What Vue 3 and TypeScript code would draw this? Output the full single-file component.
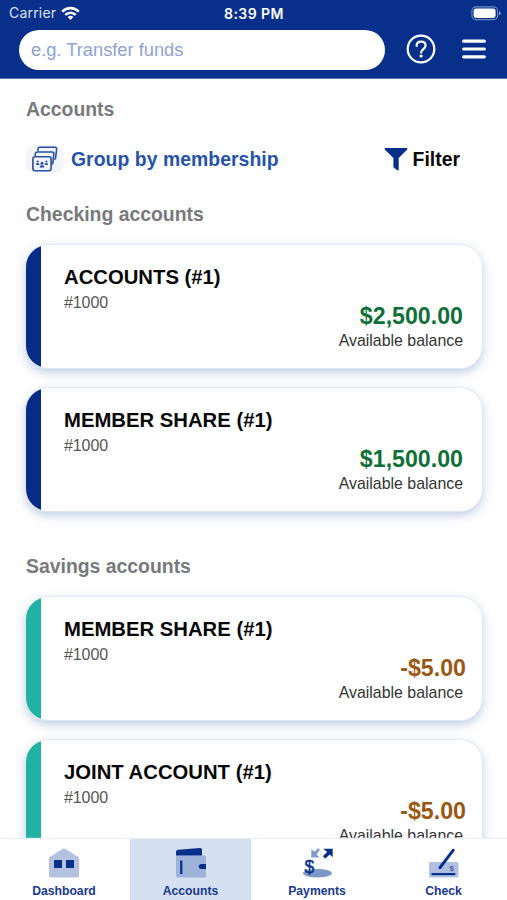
<script setup lang="ts">
interface Account {
  name: string
  number: string
  balance: string
  negative?: boolean
}
interface Section {
  title: string
  kind: string
  accounts: Account[]
}

const sections: Section[] = [
  {
    title: 'Checking accounts',
    kind: 'checking',
    accounts: [
      { name: 'ACCOUNTS (#1)', number: '#1000', balance: '$2,500.00' },
      { name: 'MEMBER SHARE (#1)', number: '#1000', balance: '$1,500.00' },
    ],
  },
  {
    title: 'Savings accounts',
    kind: 'savings',
    accounts: [
      { name: 'MEMBER SHARE (#1)', number: '#1000', balance: '-$5.00', negative: true },
      { name: 'JOINT ACCOUNT (#1)', number: '#1000', balance: '-$5.00', negative: true },
    ],
  },
]
</script>

<template>
  <div class="screen">
    <header class="top">
      <div class="status">
        <div class="carrier">
          <span>Carrier</span>
          <svg width="19" height="15" viewBox="0 0 19 15" fill="none" stroke="#fff" stroke-width="2.6">
            <path d="M1.2 5.6C6 .9 13 .9 17.8 5.6" />
            <path d="M4.3 8.9c3-2.9 7.4-2.9 10.4 0" />
            <path d="M6.7 10.9c1.6-1.5 4-1.5 5.6 0L9.5 14z" fill="#fff" stroke="none" />
          </svg>
        </div>
        <span class="time">8:39 PM</span>
        <div class="power">
          <svg width="31" height="15" viewBox="0 0 31 15">
            <rect x=".9" y=".9" width="25.7" height="12.7" rx="4" fill="none" stroke="#6f89c0" stroke-width="1.1" />
            <rect x="2.6" y="2.6" width="22" height="9.4" rx="2.4" fill="#fff" />
            <path d="M28.2 5v4.5q1.5-.6 1.5-2.25T28.2 5z" fill="#8da2d0" />
          </svg>
        </div>
      </div>
      <div class="tools">
        <div class="search">e.g. Transfer funds</div>
        <svg class="help" width="30" height="30" viewBox="0 0 30 30" fill="none" stroke="#fff" stroke-width="2.2">
          <circle cx="15" cy="15" r="13.3" />
          <path d="M10.6 11.9c0-2.6 1.9-4.3 4.5-4.3s4.5 1.6 4.5 4c0 3.4-4.5 3.6-4.5 7" stroke-linecap="round" />
          <circle cx="15.1" cy="22" r="1.6" fill="#fff" stroke="none" />
        </svg>
        <svg class="burger" width="24" height="22" viewBox="0 0 24 22" stroke="#fff" stroke-width="3.2" stroke-linecap="round">
          <path d="M1.7 3.2h20.6M1.7 11h20.6M1.7 18.8h20.6" />
        </svg>
      </div>
    </header>

    <main class="content">
      <h1 class="heading">Accounts</h1>
      <div class="actions">
        <div class="group">
          <span class="group-icon">
            <svg width="26" height="26" viewBox="0 0 26 26" fill="none" stroke="#2350a0" stroke-width="1.6" stroke-linejoin="round">
              <path d="M6 5V3q0-1.7 1.7-1.7h15.4q1.6 0 1.5 1.7l-1 9q-.1 1.3-1.3 1.3" />
              <path d="M3.3 10V7.800q.1-1.8 1.8-1.8h15.1q1.7 0 1.6 1.7l-.9 9.300q-.2 1.3-1.4 1.3" />
              <rect x=".9" y="10.7" width="18.2" height="14" rx="2.2" />
              <g fill="#2350a0" stroke="none">
                <circle cx="5.7" cy="15.5" r="1.1" /><path d="M3.9 19q0-2 1.8-2t1.8 2z" />
                <circle cx="10" cy="17.2" r="1.5" /><path d="M7.5 21.6q.1-2.5 2.5-2.5t2.5 2.5z" />
                <circle cx="14.4" cy="15.5" r="1.1" /><path d="M12.6 19q0-2 1.8-2t1.8 2z" />
              </g>
            </svg>
          </span>
          <span class="group-label">Group by membership</span>
        </div>
        <div class="filter">
          <svg width="24" height="24" viewBox="0 0 24 24" fill="#08308b">
            <path d="M.7 1h22.600v1.600L14.700 11v12.300h-1.400L9.400 20.300V11L.7 2.600z" />
          </svg>
          <span>Filter</span>
        </div>
      </div>

      <section v-for="s in sections" :key="s.title" class="section" :class="s.kind">
        <h2 class="heading">{{ s.title }}</h2>
        <div class="cards">
          <article v-for="(a, i) in s.accounts" :key="i" class="card">
            <div class="stripe"></div>
            <div class="body">
              <div class="name">{{ a.name }}</div>
              <div class="number">{{ a.number }}</div>
              <div class="amount" :class="{ negative: a.negative }">{{ a.balance }}</div>
              <div class="caption">Available balance</div>
            </div>
          </article>
        </div>
      </section>
    </main>

    <nav class="tabs">
      <div class="tab">
        <svg width="34" height="34" viewBox="0 0 34 34">
          <path d="M2 12.5 17 3l15 9.500V31q0 1.500-1.500 1.500h-27Q2 32.500 2 31z" fill="#b4c1df" />
          <path d="M7 15h8v8H7zM19 15h8v8h-8z" fill="#08308b" />
        </svg>
        <span>Dashboard</span>
      </div>
      <div class="tab active">
        <svg width="34" height="34" viewBox="0 0 34 34">
          <path d="M2 10.500h28.500q1.500 0 1.500 1.500v19q0 1.500-1.500 1.500h-27Q2 32.500 2 31z" fill="#9eb2da" />
          <path d="M2 10.500V7q0-2 2-2.200l22-1.800q2-.1 2 1.800v5.700z" fill="#08308b" />
          <path d="M6.100 15.500h2.300V29H6.100zM32 19v5h-4.700q-2.500 0-2.500-2.500t2.500-2.500z" fill="#08308b" />
        </svg>
        <span>Accounts</span>
      </div>
      <div class="tab">
        <svg width="34" height="34" viewBox="0 0 34 34">
          <ellipse cx="17.500" cy="28.200" rx="14.500" ry="4.200" fill="#7e98c9" />
          <path d="m20 4.500-2-1.200-3.600 3.500-3-2.800-.2 8.400h8.300l-2.900-3z" fill="#8299ca" />
          <path d="M23.300 3.800h9.400v8.400l-2.900-2.800-4.500 4.200-2.500-2.400 4.300-4.300z" fill="#08308b" />
          <text x="4.500" y="27.500" font-size="17.500" font-family="Liberation Sans, sans-serif" font-weight="normal" fill="#08308b" stroke="#08308b" stroke-width=".5">$</text>
        </svg>
        <span>Payments</span>
      </div>
      <div class="tab">
        <svg width="34" height="34" viewBox="0 0 34 34">
          <rect x="2" y="17" width="29.500" height="15.500" rx="1.500" fill="#b1c0e0" />
          <path d="M4.500 28h23.800v2.200H4.500z" fill="#08308b" />
          <path d="m26.300 5.200-13.200 17.300" stroke="#08308b" stroke-width="2.900" stroke-linecap="round" />
          <path d="m11.600 24.500.5-3.300 2.300 1.700z" fill="#08308b" />
          <text x="22.500" y="25.500" font-size="8" font-family="Liberation Sans, sans-serif" font-weight="bold" fill="#4565ab">$</text>
        </svg>
        <span>Check</span>
      </div>
    </nav>
  </div>
</template>

<style>
body {
  margin: 0;
  background: #fff;
  overflow: hidden;
}
</style>

<style scoped>
.screen {
  width: 507px;
  height: 900px;
  display: flex;
  flex-direction: column;
  overflow: hidden;
  background: #fefefe;
  font-family: "Liberation Sans", Arial, sans-serif;
}
.screen svg {
  display: block;
  flex: none;
}
.top {
  height: 79px;
  flex: none;
  background: #08308b;
  box-sizing: border-box;
  border-bottom: 1px solid #5876b8;
}
.status {
  height: 30px;
  padding: 0 6px 0 9px;
  display: grid;
  grid-template-columns: 1fr auto 1fr;
  align-items: center;
  box-sizing: border-box;
  color: #fff;
  font-family: Inter, sans-serif;
  font-size: 14px;
  line-height: 28px;
}
.carrier {
  display: flex;
  align-items: center;
  gap: 5px;
  height: 26px;
  line-height: 26px;
  margin-top: -4px;
  color: #dce3f3;
  letter-spacing: 0.2px;
}
.time {
  height: 28px;
  margin: -2px 1px 0 -1px;
  font-weight: 600;
  font-size: 14px;
  letter-spacing: 0.45px;
}
.power {
  display: flex;
  justify-content: flex-end;
  height: 15px;
  margin: -3px -1px 0 0;
}
.tools {
  display: flex;
  align-items: center;
  height: 40px;
  padding-left: 19px;
}
.search {
  width: 366px;
  height: 40px;
  padding-left: 12px;
  box-sizing: border-box;
  border-radius: 20px;
  background: #fff;
  color: #8fa3cf;
  font-size: 18.3px;
  line-height: 39px;
}
.help {
  margin-left: 21px;
  margin-top: -2px;
}
.burger {
  margin-left: 26px;
  margin-top: -2px;
}
.content {
  flex: 1;
  min-height: 0;
  overflow: hidden;
  padding: 17px 25px 0 26px;
}
.heading {
  margin: 0;
  height: 26px;
  line-height: 26px;
  font-size: 19.4px;
  font-weight: bold;
  color: #78797c;
}
.actions {
  margin-top: 20px;
  height: 34px;
  display: flex;
  align-items: center;
  justify-content: space-between;
  padding-right: 22px;
  font-size: 19.4px;
  font-weight: bold;
}
.group,
.filter {
  display: flex;
  align-items: center;
}
.group-icon {
  width: 38px;
  height: 28px;
  border-radius: 9px;
  background: #f3f5fb;
  display: flex;
  align-items: center;
  justify-content: center;
}
.group-label {
  margin-left: 7px;
  color: #2453a9;
  letter-spacing: 0.04px;
}
.filter {
  gap: 5px;
  color: #080808;
}
.section {
  margin-top: 42px;
}
.actions + .section {
  margin-top: 25px;
}
.cards {
  margin-top: 18px;
  display: flex;
  flex-direction: column;
  gap: 20px;
}
.card {
  height: 123px;
  display: flex;
  border-radius: 22px;
  overflow: hidden;
  background: #fff;
  box-shadow: 0 0 1px 1px #e4e9f2, 0 4px 10px 1px rgba(50, 90, 170, 0.28);
}
.stripe {
  width: 15px;
  flex: none;
  background: #052d87;
}
.savings .stripe {
  background: #20b3a4;
}
.body {
  flex: 1;
  display: flex;
  flex-direction: column;
  padding: 20px 19px 0 23px;
}
.name {
  height: 24px;
  line-height: 24px;
  font-size: 20.3px;
  font-weight: bold;
  color: #080808;
}
.number {
  height: 14px;
  line-height: 27px;
  font-size: 16px;
  letter-spacing: -0.1px;
  color: #555;
}
.amount {
  align-self: flex-end;
  height: 26px;
  line-height: 26px;
  font-size: 23.2px;
  font-weight: bold;
  color: #0f7037;
}
.amount.negative {
  margin-right: -3px;
  color: #9a5814;
}
.caption {
  align-self: flex-end;
  height: 22px;
  line-height: 23px;
  font-size: 15.9px;
  color: #333;
}
.tabs {
  flex: none;
  height: 61px;
  display: grid;
  grid-template-columns: 130px 121px 132px 121px;
  background: #fff;
  box-shadow: 0 0 1px 1px #e9edf5;
}
.tab {
  display: flex;
  flex-direction: column;
  align-items: center;
  padding-top: 6px;
  color: #17388f;
  font-size: 12.2px;
  font-weight: bold;
}
.tab:first-child {
  padding-right: 2px;
}
.tab span {
  line-height: 16px;
  margin-top: 4px;
}
.tab.active {
  background: #d5e0f1;
}
</style>
